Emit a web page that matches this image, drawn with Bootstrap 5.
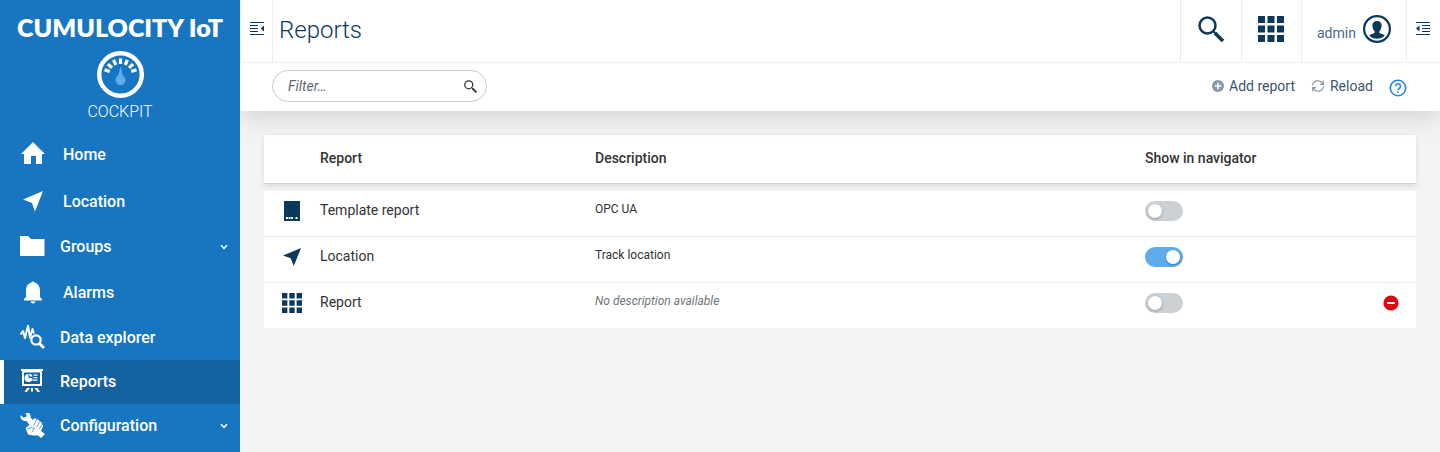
<!DOCTYPE html>
<html lang="en">
<head>
<meta charset="utf-8">
<meta name="viewport" content="width=device-width, initial-scale=1">
<title>Reports - Cockpit</title>
<link href="https://cdn.jsdelivr.net/npm/bootstrap@5.3.0/dist/css/bootstrap.min.css" rel="stylesheet">
<style>
  :root { --brand: #1776bf; --brand-dark: #14629f; --ink: #0b385b; --line: #eceef0; }
  body { font-family: Roboto, "Liberation Sans", sans-serif; font-size: 14px; line-height: 20px; color: #333; background: #f1f3f5; }
  svg { display: block; flex: none; }
  .navigator { width: 240px; background: var(--brand); }
  .brand-name { font: 800 25px/32px Lato, sans-serif; padding-top: 11px; }
  .app-name { font-size: 16px; line-height: 20px; font-weight: 300; margin-top: 4px; margin-bottom: 9px; }
  .app-link { height: 44px; padding: 0 12px 0 20px; gap: 15px; font-size: 16px; font-weight: 500; color: #fff; text-decoration: none; }
  .app-link svg { width: 25px; }
  .app-link.tall { height: 47px; gap: 17px; }
  .app-link.tall svg { width: 26px; }
  .app-link .chevron { width: 8px; margin-left: auto; }
  .app-link.active { background: var(--brand-dark); border-left: 4px solid #fff; padding-left: 16px; }
  .topbar { height: 63px; border-bottom: 1px solid var(--line); color: var(--ink); }
  .topbar .cell { border: 0; border-left: 1px solid var(--line); background: none; color: inherit; padding: 0 0 5px; display: flex; align-items: center; justify-content: center; }
  .w-drawer { width: 32px; }
  .w-drawer-end { width: 34px; }
  .w-tool { width: 61px; }
  .w-apps { width: 60px; }
  .w-user { width: 105px; gap: 7px; }
  .w-user span { color: #4a6b86; margin-top: 8px; }
  .page-title { font-size: 24px; line-height: 32px; font-weight: 300; padding: 14px 0 0 6px; }
  .actionbar { height: 48px; padding: 0 33px 2px 32px; box-shadow: 0 6px 24px rgba(0,0,0,.13); clip-path: inset(0 0 -48px 0); }
  .filter { width: 215px; height: 32px; border: 1px solid #c9cfd5; border-radius: 16px; padding: 0 9px 0 15px; }
  .filter input { border: 0; outline: 0; background: none; min-width: 0; padding: 0; color: #333; }
  .filter input::placeholder { color: #5f6b76; font-style: italic; opacity: 1; }
  .filter svg { color: #333; }
  .tool-btn { border: 0; background: none; padding: 0; color: #38566f; display: flex; align-items: center; gap: 5px; }
  .content-area { padding: 24px; }
  .report-table { width: 100%; table-layout: fixed; border-collapse: separate; border-spacing: 0; }
  .report-table thead { box-shadow: 0 2px 6px rgba(0,0,0,.1); }
  .report-table th { height: 49px; padding: 0 8px 2px; font-weight: 500; background: #fff; border-bottom: 1px solid #cdd2d6; }
  .report-table tbody::before { content: ""; display: table-row; height: 7px; }
  .report-table td { height: 46px; padding: 10px 8px 0; line-height: 18px; vertical-align: top; background: #fff; border-bottom: 1px solid var(--line); }
  .report-table tr:last-child td { height: 45px; border-bottom: 0; }
  .report-table .note { font-size: 12px; line-height: 16px; }
  .report-table td:first-child { padding-left: 16px; padding-right: 0; color: var(--ink); }
  .col-glyph, .col-act { width: 48px; } .col-name { width: 275px; } .col-show { width: 231px; }
  .toggle { appearance: none; display: block; width: 38px; height: 20px; margin: 0; border-radius: 10px; background: #ccd1d5; padding: 3px; cursor: pointer; }
  .toggle::before { content: ""; display: block; width: 14px; height: 14px; border-radius: 50%; background: #fff; box-shadow: 0 1px 3px rgba(0,0,0,.3); }
  .toggle:checked { background: #5dadec; }
  .toggle:checked::before { margin-left: auto; }
  .remove { margin: 2px 9px 0 auto; }
</style>
</head>
<body>
<svg width="0" height="0" class="position-absolute" aria-hidden="true">
  <symbol id="arrow" viewBox="0 0 20 20"><path fill="currentColor" d="M20 0 0 8.300l8.500 3.200L12 20z"/></symbol>
  <symbol id="grid" viewBox="0 0 26 26"><path fill="currentColor" d="M0 0h7v7H0zM9.500 0h7v7h-7zM19 0h7v7h-7zM0 9.500h7v7H0zM9.500 9.500h7v7h-7zM19 9.500h7v7h-7zM0 19h7v7H0zM9.500 19h7v7h-7zM19 19h7v7h-7z"/></symbol>
  <symbol id="lens" viewBox="0 0 26 26"><g fill="none" stroke="currentColor"><circle cx="9.500" cy="9.500" r="8" stroke-width="2.500"/><path stroke-width="2" d="m15 15 3 3"/><path stroke-width="3.600" d="m17 17 8 8"/></g></symbol>
  <symbol id="chev" viewBox="0 0 8 6"><path d="m1 1.300 3 3 3-3" fill="none" stroke="currentColor" stroke-width="1.600"/></symbol>
</svg>
<div class="d-flex min-vh-100">
  <aside class="navigator flex-shrink-0 text-white">
    <div class="brand-name text-center text-nowrap">CUMULOCITY IoT</div>
    <div class="d-flex justify-content-center pt-2">
      <svg width="47" height="47" viewBox="0 0 47 47"><circle cx="23.500" cy="23.500" r="21.300" fill="none" stroke="#fff" stroke-width="4.400"/><g stroke="#fff" stroke-width="3.200"><path id="tick" d="M23.500 7.500v5.500"/><use href="#tick" transform="rotate(24 23.500 24.500)"/><use href="#tick" transform="rotate(48 23.500 24.500)"/><use href="#tick" transform="rotate(70 23.500 24.500)"/><use href="#tick" transform="rotate(-24 23.500 24.500)"/><use href="#tick" transform="rotate(-48 23.500 24.500)"/><use href="#tick" transform="rotate(-70 23.500 24.500)"/></g><path d="M23.500 15 25.800 24.600a5 5 0 1 1-4.600 0z" fill="#5dadec"/></svg>
    </div>
    <div class="app-name text-center">COCKPIT</div>
    <nav class="d-flex flex-column">
      <a href="#" class="app-link tall d-flex align-items-center"><svg height="26" viewBox="0 0 26 26"><path fill="#fff" d="M13 0 25 12h-3v10h-6v-8h-5v8H4V12H1z"/></svg>Home</a>
      <a href="#" class="app-link tall d-flex align-items-center"><svg height="22" viewBox="-3 0 26 22"><path fill="#fff" d="M20 0 0 8.500l9 3.500 3 8.500z"/></svg>Location</a>
      <a href="#" class="app-link d-flex align-items-center"><svg height="22" viewBox="0 0 25 22"><path fill="#fff" d="M0 0h8l3 3h13.500v17H0z"/></svg>Groups<svg class="chevron" height="6"><use href="#chev"/></svg></a>
      <a href="#" class="app-link tall d-flex align-items-center"><svg height="24" viewBox="0 1 26 24"><path fill="#fff" d="M11.500 2.500a1.600 1.600 0 0 1 3 0C18.500 3.500 20 7 20 11v6l2 2v1.500H4V19l2-2v-6c0-4 1.500-7.500 5.500-8.500zM10.500 21.500h5c-.5 2.500-4.500 2.500-5 0z"/></svg>Alarms</a>
      <a href="#" class="app-link d-flex align-items-center"><svg height="26" viewBox="0 1 25 26"><path d="M.5 10.500 3 7l2 7L8 1.500l2 12L12.500 5l1.500 4.500" fill="none" stroke="#fff" stroke-width="2" stroke-linejoin="round"/><circle cx="16" cy="16" r="4.700" fill="none" stroke="#fff" stroke-width="2.200"/><path d="m19.500 19.500 4.500 4.500" stroke="#fff" stroke-width="3"/></svg>Data explorer</a>
      <a href="#" class="app-link active d-flex align-items-center" aria-current="page"><svg height="26" viewBox="0 1 25 26"><path fill="#fff" fill-rule="evenodd" d="M1 0h22v3H1zM2 3h20v15H2zM4 4.500v11.500h16V4.500z"/><path fill="#fff" d="M8.500 6v4h4a4 4 0 1 1-4-4zM9.500 5.500a3.800 3.800 0 0 1 3 3h-3zM13.500 6.500h4v1.200h-4zM13.500 9h4v1.200h-4zM12.500 11.500h5v1.200h-5zM7 20h3l-3 4H4.500zM11 20h2v3.500h-2zM14.500 20h3l2.500 4h-2.500z"/></svg>Reports</a>
      <a href="#" class="app-link d-flex align-items-center"><svg height="26" viewBox="0 1 25 26"><path fill="#fff" d="M4.500 0c3.500-.7 6.500 1.500 6 5.200L14 9.500 9.500 13 6.500 9C3 9.500 0 7 .3 3L3.500 5.500 6.300 5 6.500 2.300z"/><path fill="#fff" d="M5.500 16 9.500 13l4-6c1-1.500 3-1 3 1 1.300-1.500 3.500 0 3 2 1.500-.8 3 .8 2.300 2.500 1.200 0 1.800 1.500.8 3L21 19l4 3-4 4-3-2.500h-4.500L8 22.500z"/><path d="m16.500 8-3 5.500M19.500 10.300l-3 5M21.800 12.700l-2.600 4.500M7 17l4.500-1.500 3 1-2.500 3.500" fill="none" stroke="var(--brand)" stroke-width=".7"/></svg>Configuration<svg class="chevron" height="6"><use href="#chev"/></svg></a>
    </nav>
  </aside>
  <main class="flex-grow-1">
    <header class="topbar d-flex bg-white">
      <button class="cell w-drawer" aria-label="Toggle navigator"><svg width="14" height="14" viewBox="0 0 14 14"><path d="M0 .5h14M0 3.500h8M0 6.500h8M0 9.500h8M0 12.500h14" stroke="currentColor"/><path d="M14 3.500v6l-3.200-3z" fill="currentColor"/></svg></button>
      <div class="border-start flex-grow-1" style="--bs-border-color: var(--line)"><h1 class="page-title m-0">Reports</h1></div>
      <button class="cell w-tool" aria-label="Search"><svg width="26" height="26"><use href="#lens"/></svg></button>
      <button class="cell w-apps" aria-label="Applications"><svg width="26" height="26"><use href="#grid"/></svg></button>
      <button class="cell w-user"><span>admin</span><svg width="28" height="28" viewBox="0 0 28 28"><circle cx="14" cy="14" r="12.900" fill="none" stroke="currentColor" stroke-width="2.200"/><path fill="currentColor" d="M14 6c3.300 0 4.800 2 4.600 5-.2 2.600-1.200 4.500-2.300 5.400v1.200c.5 1.300 4.200 1.400 5.500 2.900-2 2.100-4.700 3.300-7.800 3.300s-5.800-1.200-7.800-3.300c1.300-1.500 5-1.600 5.500-2.900v-1.200C10.600 15.500 9.600 13.600 9.400 11 9.200 8 10.700 6 14 6z"/></svg></button>
      <button class="cell w-drawer-end" aria-label="Toggle drawer"><svg width="14" height="14" viewBox="0 0 14 14"><path d="M0 .5h14M6 3.500h8M6 6.500h8M6 9.500h8M0 12.500h14" stroke="currentColor"/><path d="M0 6.500l3.500-3v6z" fill="currentColor"/></svg></button>
    </header>
    <div class="actionbar d-flex align-items-center bg-white">
      <label class="filter d-flex align-items-center me-auto"><input type="text" class="flex-grow-1" placeholder="Filter…" aria-label="Filter"><svg width="13" height="13"><use href="#lens"/></svg></label>
      <button class="tool-btn"><svg width="12" height="12" viewBox="0 0 12 12"><circle cx="6" cy="6" r="6" fill="#8599a9"/><path d="M6 2.800v6.400M2.800 6h6.400" stroke="#fff" stroke-width="1.600"/></svg>Add report</button>
      <button class="tool-btn ms-3"><svg width="14" height="12" viewBox="0 0 14 12" fill="none" stroke="#8599a9" stroke-width="1.200"><path d="M1.500 5.500a5.300 5.300 0 0 1 10-1.800M12.500 6.500a5.300 5.300 0 0 1-10 1.800M12.300.5v3.800H9M1.700 11.500V7.700H5"/></svg>Reload</button>
      <button class="tool-btn ms-3 pt-1" aria-label="Help"><svg width="18" height="18" viewBox="0 0 18 18" fill="none" stroke="#1e88e0" stroke-width="1.600"><circle cx="9" cy="9" r="7.700"/><path d="M6.500 7.200a2.500 2.500 0 1 1 3.900 2.100C9.400 10 9 10.300 9 11.200M9 12.400V14"/></svg></button>
    </div>
    <div class="content-area">
      <table class="report-table">
        <colgroup><col class="col-glyph"><col class="col-name"><col><col class="col-show"><col class="col-act"></colgroup>
        <thead><tr><th></th><th>Report</th><th>Description</th><th>Show in navigator</th><th></th></tr></thead>
        <tbody>
          <tr><td><svg width="24" height="20" viewBox="-4 0 24 20"><path fill="currentColor" d="M0 0h16v20H0z"/><path d="M2 17h7M11.500 17h2" stroke="#fff" stroke-width="2" stroke-dasharray="2 .6"/></svg></td><td>Template report</td><td class="note">OPC UA</td><td><input class="toggle" type="checkbox" role="switch" aria-label="Show Template report in navigator"></td><td></td></tr>
          <tr><td><svg width="24" height="20" viewBox="-3 -1 24 20"><use href="#arrow" width="18" height="18"/></svg></td><td>Location</td><td class="note">Track location</td><td><input class="toggle" type="checkbox" role="switch" checked aria-label="Show Location in navigator"></td><td></td></tr>
          <tr><td><svg width="24" height="20" viewBox="-2 0 24 20"><use href="#grid" width="20" height="20"/></svg></td><td>Report</td><td class="note fst-italic text-secondary">No description available</td><td><input class="toggle" type="checkbox" role="switch" aria-label="Show Report in navigator"></td><td><button class="tool-btn remove" aria-label="Remove report"><svg width="16" height="16" viewBox="0 0 16 16"><circle cx="8" cy="8" r="7.600" fill="#e2000f"/><path d="M4 8h8" stroke="#fff" stroke-width="2"/></svg></button></td></tr>
        </tbody>
      </table>
    </div>
  </main>
</div>
<script src="https://cdn.jsdelivr.net/npm/bootstrap@5.3.0/dist/js/bootstrap.bundle.min.js"></script>
</body>
</html>
